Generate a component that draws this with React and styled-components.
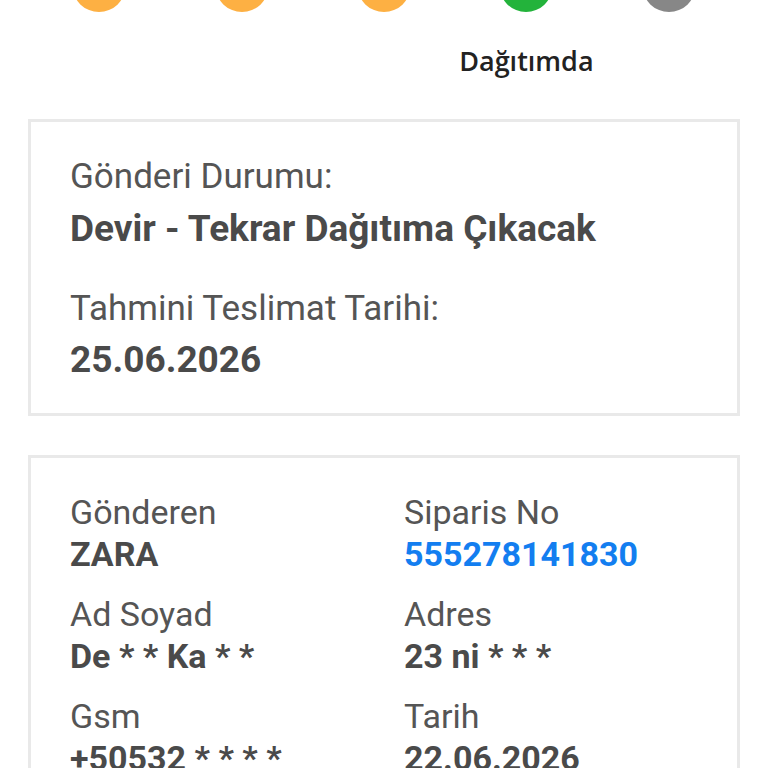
import React from "react";
import styled, { createGlobalStyle } from "styled-components";

const GlobalStyle = createGlobalStyle`
  html, body {
    margin: 0;
    padding: 0;
    background: #fff;
  }
  body {
    font-family: Roboto, "Liberation Sans", Arial, sans-serif;
  }
`;

/* pagina */
const Page = styled.div`
  width: 768px;
  height: 768px;
  overflow: hidden;
  padding: 0 28px;
  box-sizing: border-box;
`;

/* barra de etapas */
const Stepper = styled.div`
  display: grid;
  grid-template-columns: repeat(5, 1fr);
  margin-top: -38px;
  height: 157px;
`;

const Step = styled.div`
  display: flex;
  flex-direction: column;
  align-items: center;
`;

const Dot = styled.div`
  width: 52px;
  height: 50px;
  border-radius: 50%;
  background: ${(p) => p.color};
`;

const StepLabel = styled.div`
  margin-top: 30px;
  font-family: "Open Sans", "Noto Sans", sans-serif;
  font-weight: 600;
  font-size: 27px;
  line-height: 37px;
  color: #222;
  white-space: nowrap;
`;

const Card = styled.div`
  border: 3px solid #e9e9e9;
  padding: ${(p) => p.pad};
  margin-bottom: 39px;
`;

const Label = styled.div`
  font-size: ${(p) => p.size || "35px"};
  line-height: ${(p) => p.lh || "42px"};
  color: #555;
  white-space: nowrap;
`;

const Value = styled.div`
  font-size: ${(p) => p.size || "37px"};
  line-height: ${(p) => p.lh || "42px"};
  font-weight: 700;
  color: ${(p) => (p.link ? "#137ef0" : "#4a4a4a")};
  margin-top: ${(p) => p.gap || "10px"};
  white-space: nowrap;
`;

const Block = styled.div`
  margin-top: ${(p) => p.top || "0"};
`;

const Grid = styled.div`
  display: grid;
  grid-template-columns: 334px 1fr;
  row-gap: 20px;
`;

const steps = [
  { color: "#fdb043" },
  { color: "#fdb043" },
  { color: "#fdb043" },
  { color: "#23b33b", label: "Dağıtımda" },
  { color: "#878787" },
];

const details = [
  ["Gönderen", "ZARA"],
  ["Siparis No", "555278141830", true],
  ["Ad Soyad", "De * * Ka * *"],
  ["Adres", "23 ni * * *"],
  ["Gsm", "+50532 * * * *"],
  ["Tarih", "22.06.2026"],
];

export default function App() {
  return (
    <Page>
      <GlobalStyle />
      <Stepper>
        {steps.map((s, i) => (
          <Step key={i}>
            <Dot color={s.color} />
            {s.label && <StepLabel>{s.label}</StepLabel>}
          </Step>
        ))}
      </Stepper>

      <Card pad="34px 39px 32px">
        <Block>
          <Label>Gönderi Durumu:</Label>
          <Value>Devir - Tekrar Dağıtıma Çıkacak</Value>
        </Block>
        <Block top="38px">
          <Label>Tahmini Teslimat Tarihi:</Label>
          <Value gap="9px">25.06.2026</Value>
        </Block>
      </Card>

      <Card pad="34px 39px">
        <Grid>
          {details.map(([l, v, link]) => (
            <Block key={l}>
              <Label size="34px" lh="40px">
                {l}
              </Label>
              <Value link={link} size="34px" lh="40px" gap="2px">
                {v}
              </Value>
            </Block>
          ))}
        </Grid>
      </Card>
    </Page>
  );
}
